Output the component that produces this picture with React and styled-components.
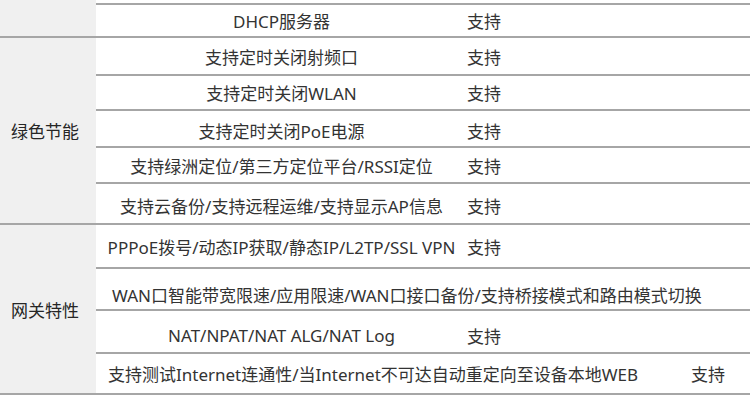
import React from "react";
import styled, { createGlobalStyle } from "styled-components";

const Global = createGlobalStyle`
  html, body { margin: 0; padding: 0; background: #ffffff; }
  body { font-family: "Noto Sans", "Noto Sans CJK SC", sans-serif; }
`;

const LINE = "2px solid #a6a6a6";

const Table = styled.div`
  width: 750px;
  display: flex;
  flex-direction: column;
  color: #333333;
  font-size: 17px;
`;

const Group = styled.section`
  display: grid;
  grid-template-columns: 96px 1fr;
  border-bottom: ${LINE};
`;

const Label = styled.div`
  background: #f0f0f0;
  display: flex;
  align-items: center;
  justify-content: center;
  padding-right: 6px;
  color: #262626;
  font-size: 17px;
  font-family: "Noto Sans CJK SC", sans-serif;
`;

const Rows = styled.div`
  display: flex;
  flex-direction: column;
`;

const Stub = styled.div`
  height: 3px;
  border-bottom: ${LINE};
`;

const Row = styled.div`
  box-sizing: border-box;
  display: grid;
  grid-template-columns: ${(p) => p.$cols || "371px 1fr"};
  align-items: center;
  height: ${(p) => p.$h}px;
  padding-top: ${(p) => (p.$shift || 0) * 2}px;
  border-bottom: ${LINE};
  &:last-child {
    border-bottom: none;
  }
`;

const Feature = styled.div`
  white-space: nowrap;
  text-align: ${(p) => p.$align || "center"};
  padding-left: ${(p) => p.$pad || 0}px;
`;

const Value = styled.div`
  white-space: nowrap;
  font-family: "Noto Sans CJK SC", sans-serif;
`;

const groups = [
  {
    label: "",
    stub: true,
    rows: [{ f: "DHCP服务器", v: "支持", h: 31 }],
  },
  {
    label: "绿色节能",
    rows: [
      { f: "支持定时关闭射频口", v: "支持", h: 38, shift: -1 },
      { f: "支持定时关闭WLAN", v: "支持", h: 35 },
      { f: "支持定时关闭PoE电源", v: "支持", h: 37, shift: 1.5 },
      { f: "支持绿洲定位/第三方定位平台/RSSI定位", v: "支持", h: 36 },
      { f: "支持云备份/支持远程运维/支持显示AP信息", v: "支持", h: 39, shift: 1.5 },
    ],
  },
  {
    label: "网关特性",
    rows: [
      { f: "PPPoE拨号/动态IP获取/静态IP/L2TP/SSL VPN", v: "支持", h: 44 },
      {
        f: "WAN口智能带宽限速/应用限速/WAN口接口备份/支持桥接模式和路由模式切换",
        h: 42,
        shift: 5,
        cols: "1fr",
        align: "left",
        pad: 16,
      },
      { f: "NAT/NPAT/NAT ALG/NAT Log", v: "支持", h: 43, shift: 4 },
      {
        f: "支持测试Internet连通性/当Internet不可达自动重定向至设备本地WEB",
        v: "支持",
        h: 39,
        cols: "595px 1fr",
        align: "left",
        pad: 12,
      },
    ],
  },
];

export default function App() {
  return (
    <>
      <Global />
      <Table>
        {groups.map((g, gi) => (
          <Group key={gi}>
            <Label>{g.label}</Label>
            <Rows>
              {g.stub && <Stub />}
              {g.rows.map((r, ri) => (
                <Row key={ri} $h={r.h} $shift={r.shift} $cols={r.cols}>
                  <Feature $align={r.align} $pad={r.pad}>
                    {r.f}
                  </Feature>
                  {r.v && <Value>{r.v}</Value>}
                </Row>
              ))}
            </Rows>
          </Group>
        ))}
      </Table>
    </>
  );
}
